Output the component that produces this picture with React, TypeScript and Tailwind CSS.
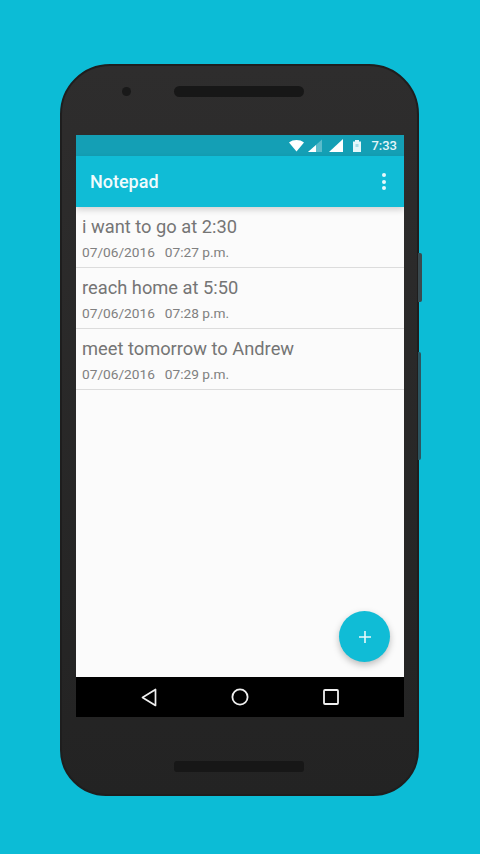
import React from "react";

const notes = [
  { title: "i want to go at 2:30", time: "07:27 p.m." },
  { title: "reach home at 5:50", time: "07:28 p.m." },
  { title: "meet tomorrow to Andrew", time: "07:29 p.m." },
];

function StatusIcons() {
  return (
    <svg width="73" height="16" viewBox="0 0 73 16" className="block">
      <path d="M0 4.5 C4 1.2 11 1.2 15 4.5 L7.5 13.5 Z" fill="#ffffff" />
      <path d="M19 14 L33 1.5 V14 Z" fill="#ffffff" fillOpacity="0.3" />
      <path d="M19 14 L27 7 V14 Z" fill="#ffffff" />
      <path d="M40 14 L54 1 V14 Z" fill="#ffffff" />
      <path d="M64 3.5 H66 V2 H70 V3.5 H72 V14 H64 Z" fill="#e6f7fa" />
      <rect x="66.5" y="6" width="3" height="3" fill="#a8dde6" />
    </svg>
  );
}

export default function App() {
  return (
    <div className="w-[480px] h-[854px] overflow-hidden bg-[#0cbcd6] pt-[64px] pl-[60px] font-['Roboto',sans-serif]">
      <div className="relative w-[359px] h-[732px] rounded-tl-[50px] rounded-tr-[50px] rounded-bl-[46px] rounded-br-[46px] bg-gradient-to-b from-[#2e2d2d] to-[#232323] border-2 border-[#1e1e1e] flex flex-col items-center">
        <div className="absolute right-[-5px] top-[187px] w-[4px] h-[49px] rounded-r-[2px] bg-[#3a4a4f]" />
        <div className="absolute right-[-4px] top-[286px] w-[3px] h-[108px] rounded-r-[2px] bg-[#2c5560]" />

        <div className="h-[69px] w-full relative flex items-start justify-center pt-[20px]">
          <div className="absolute left-[60px] top-[21px] w-[9px] h-[9px] rounded-full bg-[#191919]" />
          <div className="w-[130px] h-[11px] ml-[-1px] rounded-full bg-[#171717]" />
        </div>

        <div className="relative w-[328px] h-[582px] ml-[1px] flex flex-col bg-[#fbfbfb] overflow-hidden">
          <div className="h-[21px] shrink-0 bg-[#149fb5] flex items-center pr-[7px] justify-end gap-[9px]">
            <StatusIcons />
            <span className="text-[13px] font-medium leading-none text-[#e4f6f9]">7:33</span>
          </div>

          <div className="relative h-[51px] shrink-0 bg-[#10bcd6] flex items-center justify-between pl-[14px] pr-[18px] shadow-[0_3px_6px_rgba(0,0,0,0.16)]">
            <span className="text-[18px] font-medium text-[#f1fbfd] leading-none">Notepad</span>
            <div className="flex flex-col gap-[2.5px]">
              <div className="w-[4px] h-[4px] rounded-full bg-[#e6f8fb]" />
              <div className="w-[4px] h-[4px] rounded-full bg-[#e6f8fb]" />
              <div className="w-[4px] h-[4px] rounded-full bg-[#e6f8fb]" />
            </div>
          </div>

          <div className="flex-1 flex flex-col">
            {notes.map((n) => (
              <div key={n.time} className="h-[61px] border-b border-[#dcdcdc] pl-[6px] pt-[8px]">
                <div className="text-[18.3px] leading-[24px] text-[#757575]">{n.title}</div>
                <div className="text-[13.7px] leading-[18px] mt-[4px] text-[#808080] flex gap-[10px]">
                  <span>07/06/2016</span>
                  <span>{n.time}</span>
                </div>
              </div>
            ))}
          </div>

          <div className="absolute left-[263px] top-[476px] w-[51px] h-[51px] rounded-full bg-[#10bcd6] shadow-[0_3px_7px_rgba(0,0,0,0.25)] flex items-center justify-center">
            <svg width="14" height="14" viewBox="0 0 14 14">
              <path d="M7 1 V13 M1 7 H13" stroke="#e9f9fb" strokeWidth="1.6" />
            </svg>
          </div>

          <div className="h-[40px] shrink-0 bg-black flex items-center pl-[65px] gap-[74px]">
            <svg width="16" height="19" viewBox="0 0 16 19">
              <path d="M14.5 1.5 V17.5 L1.5 9.5 Z" fill="none" stroke="#f0f0f0" strokeWidth="1.7" strokeLinejoin="round" />
            </svg>
            <svg width="18" height="18" viewBox="0 0 18 18">
              <circle cx="9" cy="9" r="7.6" fill="none" stroke="#f0f0f0" strokeWidth="1.8" />
            </svg>
            <svg width="16" height="16" viewBox="0 0 16 16">
              <rect x="1" y="1" width="14" height="14" rx="1" fill="none" stroke="#f0f0f0" strokeWidth="1.8" />
            </svg>
          </div>
        </div>

        <div className="flex-1 w-full flex items-start justify-center pt-[44px]">
          <div className="w-[130px] h-[11px] ml-[-1px] rounded-[3px] bg-[#171717]" />
        </div>
      </div>
    </div>
  );
}
